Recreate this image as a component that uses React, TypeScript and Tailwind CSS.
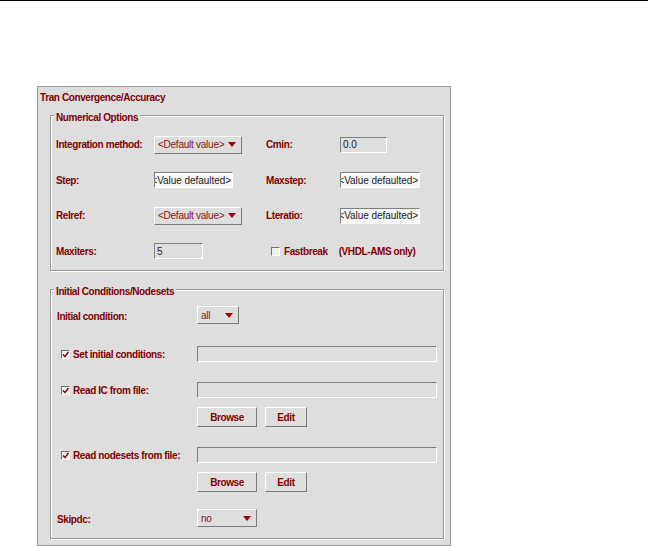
import type { ReactNode } from "react";

const font = { fontFamily: '"Liberation Sans", Arial, sans-serif' };

function Label({ children, className = "" }: { children: ReactNode; className?: string }) {
  return (
    <span className={`text-[10px] font-bold tracking-[-0.4px] text-[#800000] whitespace-nowrap ${className}`}>
      {children}
    </span>
  );
}

function Dropdown({ text, w }: { text: string; w: string }) {
  return (
    <div
      className={`${w} h-[18px] flex items-center justify-between pl-[3px] pr-[5px] bg-[#dedede] border border-t-white border-l-white border-b-[#7a7a7a] border-r-[#7a7a7a]`}
    >
      <span className="text-[10px] tracking-[-0.25px] text-[#8a1010] whitespace-nowrap">{text}</span>
      <svg width="8" height="5" viewBox="0 0 8 5">
        <path d="M0 0 H8 L4 5 Z" fill="#a00000" />
      </svg>
    </div>
  );
}

function Field({ w, value = "", white = false }: { w: string; value?: string; white?: boolean }) {
  return (
    <div
      className={`${w} h-[16px] flex items-center justify-end overflow-hidden pr-[1px] border border-t-[#808080] border-l-[#808080] border-b-white border-r-white ${
        white ? "bg-[#f6f6f6]" : "bg-[#dedede]"
      }`}
    >
      <span className="text-[10px] tracking-[-0.05px] text-[#222] whitespace-nowrap">{value}</span>
    </div>
  );
}

function LeftField({ w, value }: { w: string; value: string }) {
  return (
    <div className={`${w} h-[16px] flex items-center pl-[2px] overflow-hidden border border-t-[#808080] border-l-[#808080] border-b-white border-r-white bg-[#dedede]`}>
      <span className="text-[10px] text-[#222]">{value}</span>
    </div>
  );
}

function Check({ checked }: { checked: boolean }) {
  return (
    <div className="w-[9px] h-[9px] flex items-center justify-center border border-t-[#707070] border-l-[#707070] border-b-white border-r-white bg-[#eeeeee]">
      {checked && (
        <svg width="7" height="7" viewBox="0 0 7 7">
          <path d="M1 3.5 L3 5.5 L6.5 1" stroke="#800000" strokeWidth="1.4" fill="none" />
        </svg>
      )}
    </div>
  );
}

function Button({ text, w }: { text: string; w: string }) {
  return (
    <div
      className={`${w} h-[20px] flex items-center justify-center bg-[#dedede] border border-t-white border-l-white border-b-[#7a7a7a] border-r-[#7a7a7a]`}
    >
      <Label>{text}</Label>
    </div>
  );
}

function Group({ title, h, className = "", children }: { title: string; h: string; className?: string; children: ReactNode }) {
  return (
    <div
      className={`ml-[12px] w-[394px] ${h} border border-[#9a9a9a] shadow-[1px_1px_0_#ffffff,inset_1px_1px_0_#ffffff] flex flex-col ${className}`}
    >
      <div className="-mt-[6px] ml-[3px] px-[2px] h-[12px] leading-[12px] bg-[#dedede] w-fit">
        <Label>{title}</Label>
      </div>
      {children}
    </div>
  );
}

export default function App() {
  return (
    <div className="w-[648px] h-[547px] bg-white overflow-hidden" style={font}>
      <div className="h-px bg-black" />

      <div className="ml-[37px] mt-[85px] w-[414px] h-[460px] border border-[#9a9a9a] bg-[#dedede] flex flex-col">
        <div className="h-[18px] leading-[18px] pl-[2px]">
          <Label>Tran Convergence/Accuracy</Label>
        </div>

        {/* Numerical Options */}
        <Group title="Numerical Options" h="h-[156px]" className="mt-[10px]">
          <div className="mt-[14px] pl-[5px] grid grid-cols-[98px_112px_74px_1fr] auto-rows-[17px] gap-y-[18.5px] items-center">
            <Label>Integration method:</Label>
            <Dropdown text="<Default value>" w="w-[88px]" />
            <Label>Cmin:</Label>
            <LeftField w="w-[47px]" value="0.0" />

            <Label>Step:</Label>
            <Field w="w-[79px]" value="<Value defaulted>" white />
            <Label>Maxstep:</Label>
            <Field w="w-[80px]" value="<Value defaulted>" white />

            <Label>Relref:</Label>
            <Dropdown text="<Default value>" w="w-[88px]" />
            <Label>Lteratio:</Label>
            <Field w="w-[80px]" value="<Value defaulted>" white />

            <Label>Maxiters:</Label>
            <LeftField w="w-[49px]" value="5" />
            <div className="col-span-2 flex items-center pl-[5px]">
              <Check checked={false} />
              <Label className="ml-[4px]">Fastbreak</Label>
              <Label className="ml-[11px]">(VHDL-AMS only)</Label>
            </div>
          </div>
        </Group>

        {/* Initial Conditions/Nodesets */}
        <Group title="Initial Conditions/Nodesets" h="h-[250px]" className="mt-[18px]">
          <div className="mt-[10px] h-[18px] flex items-center">
            <div className="w-[146px] pl-[6px]">
              <Label>Initial condition:</Label>
            </div>
            <Dropdown text="all" w="w-[42px]" />
          </div>

          <div className="mt-[22px] h-[16px] flex items-center">
            <div className="w-[146px] pl-[10px] flex items-center gap-[3px]">
              <Check checked />
              <Label>Set initial conditions:</Label>
            </div>
            <Field w="w-[240px]" />
          </div>

          <div className="mt-[20px] h-[16px] flex items-center">
            <div className="w-[146px] pl-[10px] flex items-center gap-[3px]">
              <Check checked />
              <Label>Read IC from file:</Label>
            </div>
            <Field w="w-[240px]" />
          </div>

          <div className="mt-[9px] pl-[146px] flex gap-[8px]">
            <Button text="Browse" w="w-[60px]" />
            <Button text="Edit" w="w-[42px]" />
          </div>

          <div className="mt-[20px] h-[16px] flex items-center">
            <div className="w-[146px] pl-[10px] flex items-center gap-[3px]">
              <Check checked />
              <Label>Read nodesets from file:</Label>
            </div>
            <Field w="w-[240px]" />
          </div>

          <div className="mt-[9px] pl-[146px] flex gap-[8px]">
            <Button text="Browse" w="w-[60px]" />
            <Button text="Edit" w="w-[42px]" />
          </div>

          <div className="mt-[17px] h-[18px] flex items-center">
            <div className="w-[146px] pl-[6px]">
              <Label>Skipdc:</Label>
            </div>
            <Dropdown text="no" w="w-[60px]" />
          </div>
        </Group>
      </div>
    </div>
  );
}
